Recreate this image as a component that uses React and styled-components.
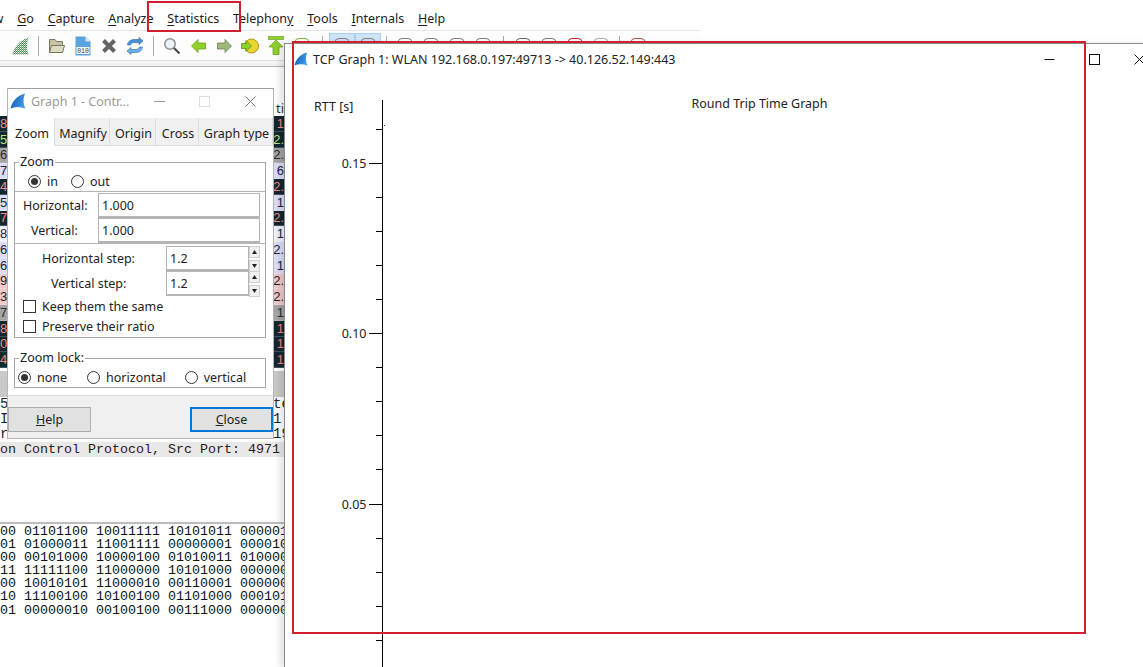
import React from "react";
import styled, { createGlobalStyle } from "styled-components";

const menus = [
	["View", "", ""],
	["", "G", "o"],
	["", "C", "apture"],
	["", "A", "nalyze"],
	["", "S", "tatistics"],
	["Telephon", "y", ""],
	["", "T", "ools"],
	["", "I", "nternals"],
	["", "H", "elp"],
];

const packets = [
	["8", "1", "alert"],
	["5", "2.", "green"],
	["6", "2.", "gray"],
	["7", "6", "lavender"],
	["4", "2.", "alert"],
	["5", "1", "lavender"],
	["7", "2.", "alert"],
	["8", "1", "pale"],
	["6", "2.", "lavender"],
	["6", "1", "lavender"],
	["9", "2.", "pink"],
	["3", "2.", "pink"],
	["7", "1", "gray"],
	["8", "1", "alert"],
	["0", "1", "alert"],
	["4", "1", "alert"],
];

const rowColors = {
	alert: ["#12272e", "#f78787"],
	green: ["#12272e", "#b9e878"],
	gray: ["#a4a4a4", "#2b2b2b"],
	lavender: ["#dcdcf8", "#12272e"],
	pale: ["#f0f0fc", "#12272e"],
	pink: ["#f4c8c8", "#12272e"],
};

const bytes = [
	"00 01101100 10011111 10101011 000001",
	"01 01000011 11001111 00000001 000010",
	"00 00101000 10000100 01010011 010000",
	"11 11111100 11000000 10101000 000000",
	"00 10010101 11000010 00110001 000000",
	"10 11100100 10100100 01101000 000101",
	"01 00000010 00100100 00111000 000000",
];

const majorTicks = [
	[163, "0.15"],
	[333, "0.10"],
	[504, "0.05"],
];
const minorTicks = [129, 197, 231, 265, 299, 367, 401, 435, 469, 538, 572, 606, 640];

const Fin = ({ size = 16 }) => (
	<svg width={size} height={size} viewBox="0 0 16 16">
		<defs>
			<linearGradient id="fin" x1="0" y1="0" x2="1" y2="0.4">
				<stop offset="0" stopColor="#0a4fa8" />
				<stop offset="1" stopColor="#3f9be8" />
			</linearGradient>
		</defs>
		<path d="M0.5 15.5C2 8.5 7 2.5 15 0.5C13 5.500 13 11 15.500 15.500C10 13.500 5 13.500 0.5 15.500Z" fill="url(#fin)" />
	</svg>
);

const SharkTool = () => (
	<svg width="17" height="18" viewBox="0 0 17 18">
		<defs>
			<pattern id="hatch" width="2" height="2" patternUnits="userSpaceOnUse">
				<rect width="1" height="1" fill="#3f8a4a" />
				<rect x="1" y="1" width="1" height="1" fill="#5f9f68" />
				<rect x="1" width="1" height="1" fill="#b5d0b8" />
			</pattern>
		</defs>
		<path d="M0.500 17.500C2 10 8 3 16.500 0.500C14.500 6 14.500 12 16.500 17.500Z" fill="url(#hatch)" />
	</svg>
);

const FolderTool = () => (
	<svg width="18" height="18" viewBox="0 0 18 18">
		<path d="M1.500 2.500H7L8.500 4.500H14.500V15.500H1.500Z" fill="#c9c5a4" stroke="#77765f" />
		<path d="M3.500 8.500H16.500L14.500 15.500H1.500Z" fill="#dedbc0" stroke="#77765f" />
	</svg>
);

const FileTool = () => (
	<svg width="16" height="20" viewBox="0 0 16 20">
		<path d="M0.500 0.500H10.500L15.500 5.500V19.500H0.500Z" fill="#5aa3dd" />
		<path d="M10.500 0.500V5.500H15.500Z" fill="#d4e8f7" />
		<rect x="1.500" y="11" width="13" height="7" fill="#f3f3ee" />
		<text x="8" y="17" textAnchor="middle" fontSize="6.500" fontFamily="Liberation Mono, monospace" fill="#444">
			010
		</text>
	</svg>
);

const CloseTool = () => (
	<svg width="16" height="16" viewBox="0 0 16 16">
		<path d="M2.500 2.500L13.500 13.500M13.500 2.500L2.500 13.500" stroke="#646464" strokeWidth="4" />
	</svg>
);

const ReloadTool = () => (
	<svg width="18" height="18" viewBox="0 0 18 18" fill="none">
		<path d="M1.500 8C2 4 5 2.500 8.500 2.500H13V0.500L17 4L13 7.500V5.500H8C6 5.500 5 6.500 4.500 8Z" fill="#4a90d6" stroke="#2b62a6" strokeWidth="0.6" />
		<path d="M16.500 10C16 14 13 15.500 9.500 15.500H5V17.500L1 14L5 10.500V12.500H10C12 12.500 13 11.500 13.500 10Z" fill="#6fb0e8" stroke="#2b62a6" strokeWidth="0.6" />
	</svg>
);

const SearchTool = () => (
	<svg width="18" height="18" viewBox="0 0 18 18" fill="none">
		<circle cx="7" cy="7" r="5.200" fill="#eef3f8" stroke="#8d8d8d" strokeWidth="1.500" />
		<path d="M11 11L16.500 16.500" stroke="#4a4a4a" strokeWidth="2.200" />
	</svg>
);

const ArrowTool = ({ dir, fill, line }) => (
	<svg width="15" height="14" viewBox="0 0 15 14">
		<path
			d={dir === "left" ? "M0.500 7L7 0.500V4H14.500V10H7V13.500Z" : "M14.500 7L8 0.500V4H0.500V10H8V13.500Z"}
			fill={fill}
			stroke={line}
			strokeWidth="0.700"
		/>
	</svg>
);

const GoTool = () => (
	<svg width="18" height="16" viewBox="0 0 18 16">
		<circle cx="10.500" cy="8" r="7" fill="#ecd42e" stroke="#a89a1c" />
		<path d="M0.500 5.500H5V2.500L10.500 8L5 13.500V10.500H0.500Z" fill="#8fcf2a" stroke="#4f8a14" strokeWidth="0.700" />
	</svg>
);

const TopTool = () => (
	<svg width="16" height="19" viewBox="0 0 16 19">
		<rect x="0.500" y="0.500" width="15" height="3" fill="#8fd02a" stroke="#5f9a18" strokeWidth="0.600" />
		<path d="M8 4L15 11H11V18.500H5V11H1Z" fill="#8fd02a" stroke="#5f9a18" strokeWidth="0.700" />
	</svg>
);

const TopOutline = ({ color = "#8a7a7a" }) => (
	<svg width="18" height="18" viewBox="0 0 18 18" fill="none">
		<rect x="2" y="1.500" width="14" height="14" rx="4" stroke={color} />
	</svg>
);

const Radio = ({ label, checked, $gap }) => (
	<RadioItem $gap={$gap}>
		<RadioMark $checked={checked} />
		{label}
	</RadioItem>
);

const Field = ({ label, value, $labelWidth, $indent }) => (
	<FieldRow>
		<FieldLabel $width={$labelWidth} $indent={$indent}>
			{label}
		</FieldLabel>
		<TextBox>{value}</TextBox>
	</FieldRow>
);

const StepField = ({ label, value, $indent }) => (
	<FieldRow>
		<FieldLabel $width={151} $indent={$indent}>
			{label}
		</FieldLabel>
		<StepBox>{value}</StepBox>
		<Spinner>
			<SpinButton>
				<svg width="5" height="4" viewBox="0 0 5 4">
					<path d="M2.500 0L5 4H0Z" fill="#222" />
				</svg>
			</SpinButton>
			<SpinButton>
				<svg width="5" height="4" viewBox="0 0 5 4">
					<path d="M0 0H5L2.500 4Z" fill="#222" />
				</svg>
			</SpinButton>
		</Spinner>
	</FieldRow>
);

const ControlDialog = () => (
	<Dialog>
		<DialogTitleBar>
			<Fin />
			<DialogTitle>Graph 1 - Contr...</DialogTitle>
			<DialogControl>
				<svg width="11" height="11" viewBox="0 0 11 11">
					<path d="M0 5.500H11" stroke="#999" />
				</svg>
			</DialogControl>
			<DialogControl>
				<svg width="11" height="11" viewBox="0 0 11 11">
					<rect x="0.500" y="0.500" width="10" height="10" fill="none" stroke="#ddd" />
				</svg>
			</DialogControl>
			<DialogControl>
				<svg width="11" height="11" viewBox="0 0 11 11">
					<path d="M0.500 0.500L10.500 10.500M10.500 0.500L0.500 10.500" stroke="#777" />
				</svg>
			</DialogControl>
		</DialogTitleBar>
		<Tabs>
			<Tab $active $width={47}>
				Zoom
			</Tab>
			<Tab $width={55}>Magnify</Tab>
			<Tab $width={46}>Origin</Tab>
			<Tab $width={43}>Cross</Tab>
			<Tab $width={74}>Graph type</Tab>
		</Tabs>
		<Pane>
			<Group>
				<Legend>Zoom</Legend>
				<RadioRow $left={13}>
					<Radio label="in" checked $gap={13} />
					<Radio label="out" />
				</RadioRow>
				<Rule $after={1} />
				<Field label="Horizontal:" value="1.000" $labelWidth={83} $indent={8} />
				<Field label="Vertical:" value="1.000" $labelWidth={83} $indent={16} />
				<Rule $after={2} />
				<StepField label="Horizontal step:" value="1.2" $indent={27} />
				<StepField label="Vertical step:" value="1.2" $indent={36} />
				<CheckList>
					<CheckRow>
						<CheckMark />
						Keep them the same
					</CheckRow>
					<CheckRow>
						<CheckMark />
						Preserve their ratio
					</CheckRow>
				</CheckList>
			</Group>
			<Group $lock>
				<Legend>Zoom lock:</Legend>
				<RadioRow $left={3}>
					<Radio label="none" checked $gap={20} />
					<Radio label="horizontal" $gap={19} />
					<Radio label="vertical" />
				</RadioRow>
			</Group>
		</Pane>
		<DialogFooter>
			<PushButton>
				<u>H</u>elp
			</PushButton>
			<PushButton $focused>
				<u>C</u>lose
			</PushButton>
		</DialogFooter>
	</Dialog>
);

const GraphWindow = () => (
	<GraphFrame>
		<GraphTitleBar>
			<Fin size={14} />
			<GraphTitle>TCP Graph 1: WLAN 192.168.0.197:49713 -&gt; 40.126.52.149:443</GraphTitle>
			<WindowControl>
				<svg width="11" height="11" viewBox="0 0 11 11">
					<path d="M0.500 5.500H10.500" stroke="#111" />
				</svg>
			</WindowControl>
			<WindowControl>
				<svg width="11" height="11" viewBox="0 0 11 11">
					<rect x="0.500" y="0.500" width="10" height="10" fill="none" stroke="#111" />
				</svg>
			</WindowControl>
			<WindowControl>
				<svg width="11" height="11" viewBox="0 0 11 11">
					<path d="M0.500 0.500L10.500 10.500M10.500 0.500L0.500 10.500" stroke="#111" />
				</svg>
			</WindowControl>
		</GraphTitleBar>
		<Plot viewBox="285 74 877 593" width="877" height="593">
			<PlotText x="314" y="111">
				RTT [s]
			</PlotText>
			<PlotText x="759.500" y="108" textAnchor="middle">
				Round Trip Time Graph
			</PlotText>
			<line x1="382.500" y1="100" x2="382.500" y2="667" stroke="#000" />
			<rect x="384" y="125" width="1" height="1" fill="#333" />
			{majorTicks.map(([y, label]) => (
				<g key={label}>
					<line x1="369" y1={y + 0.5} x2="382" y2={y + 0.5} stroke="#000" />
					<PlotText x="366.500" y={y + 5} textAnchor="end">
						{label}
					</PlotText>
				</g>
			))}
			{minorTicks.map((y) => (
				<line key={y} x1="376" y1={y + 0.5} x2="382" y2={y + 0.5} stroke="#000" />
			))}
		</Plot>
	</GraphFrame>
);

const App = () => (
	<Desktop>
		<GlobalStyle />
		<MainWindow>
			<MenuBar>
				{menus.map(([before, key, after]) => (
					<MenuItem key={before + key + after}>
						{before}
						<u>{key}</u>
						{after}
					</MenuItem>
				))}
			</MenuBar>
			<Toolbar>
				<ToolButton>
					<SharkTool />
				</ToolButton>
				<ToolSeparator />
				<ToolButton>
					<FolderTool />
				</ToolButton>
				<ToolButton>
					<FileTool />
				</ToolButton>
				<ToolButton>
					<CloseTool />
				</ToolButton>
				<ToolButton>
					<ReloadTool />
				</ToolButton>
				<ToolSeparator />
				<ToolButton>
					<SearchTool />
				</ToolButton>
				<ToolButton>
					<ArrowTool dir="left" fill="#8fd02a" line="#5f9a18" />
				</ToolButton>
				<ToolButton>
					<ArrowTool dir="right" fill="#9db87a" line="#5f7a48" />
				</ToolButton>
				<ToolButton>
					<GoTool />
				</ToolButton>
				<ToolButton>
					<TopTool />
				</ToolButton>
				<ToolButton>
					<TopOutline color="#7fb03a" />
				</ToolButton>
				<ToolSeparator $wide />
				<ToolButton $selected>
					<TopOutline />
				</ToolButton>
				<ToolButton $selected>
					<TopOutline />
				</ToolButton>
				<ToolSeparator />
				{[0, 1, 2, 3].map((i) => (
					<ToolButton key={i}>
						<TopOutline />
					</ToolButton>
				))}
				<ToolSeparator $wide />
				{["#6a6a6a", "#7a7a7a", "#d0202f", "#b0a8a8"].map((color) => (
					<ToolButton key={color}>
						<TopOutline color={color} />
					</ToolButton>
				))}
				<ToolSeparator />
				<ToolButton>
					<TopOutline color="#c05050" />
				</ToolButton>
			</Toolbar>
			<FilterGap />
			<LowerPanes>
				<PacketHeader>
					<PacketCell />
					<PacketCell $right>ti</PacketCell>
				</PacketHeader>
				{packets.map(([left, right, kind], i) => (
					<PacketRow key={i} $kind={kind}>
						<PacketCell>{left}</PacketCell>
						<PacketCell $right>{right}</PacketCell>
					</PacketRow>
				))}
				<PacketScroll />
				<DetailRow>
					<span>5</span>
					<span>te</span>
				</DetailRow>
				<DetailRow>
					<span>I</span>
					<span>1</span>
				</DetailRow>
				<DetailRow>
					<span>r</span>
					<span>19</span>
				</DetailRow>
				<DetailSelected>on Control Protocol, Src Port: 4971</DetailSelected>
				<BytesPane>
					{bytes.map((line) => (
						<ByteLine key={line}>{line}</ByteLine>
					))}
				</BytesPane>
			</LowerPanes>
		</MainWindow>
		<ControlDialog />
		<GraphWindow />
		<Annotation $left={147} $top={1} $width={94} $height={31} />
		<Annotation $left={292} $top={41} $width={794} $height={593} />
	</Desktop>
);

export default App;

const GlobalStyle = createGlobalStyle`
	html, body {
		margin: 0;
		padding: 0;
		background: #fff;
	}
	body {
		font-family: "Noto Sans", "Open Sans", sans-serif;
		font-size: 12.5px;
		color: #222;
	}
`;

const Desktop = styled.div`
	position: relative;
	width: 1143px;
	height: 667px;
	overflow: hidden;
	background: #fff;
`;

const MainWindow = styled.div`
	display: flex;
	flex-direction: column;
	width: 700px;
	height: 667px;
	overflow: hidden;
`;

const MenuBar = styled.div`
	display: flex;
	flex-shrink: 0;
	gap: 13.8px;
	height: 26px;
	margin-top: 5px;
	margin-bottom: -1px;
	margin-left: -24px;
	align-items: center;
	white-space: nowrap;
	font-size: 12.5px;
	color: #1c1c1c;
`;

const MenuItem = styled.span`
	u {
		text-underline-offset: 2px;
	}
`;

const Toolbar = styled.div`
	display: flex;
	flex-shrink: 0;
	align-items: center;
	width: 700px;
	height: 30px;
	padding-left: 7px;
	box-sizing: border-box;
	border-top: 1px solid #e6e6e6;
	background: #fdfdfd;
`;

const ToolButton = styled.div`
	display: flex;
	flex: 0 0 26px;
	align-items: center;
	justify-content: center;
	height: 26px;
	background: ${(p) => (p.$selected ? "#cde4f7" : "transparent")};
	outline: ${(p) => (p.$selected ? "1px solid #a8d0f0" : "none")};
	outline-offset: -1px;
`;

const ToolSeparator = styled.div`
	flex: 0 0 ${(p) => (p.$wide ? 14 : 11)}px;
	height: 20px;
	background: linear-gradient(#a8a8a8, #a8a8a8) center / 1px 100% no-repeat;
`;

const FilterGap = styled.div`
	flex: 0 0 40px;
	box-sizing: border-box;
	background: linear-gradient(#f7f7f7, #efefef) top / 100% 5px no-repeat;
	border-top: 1px solid #dcdcdc;

	&::after {
		content: "";
		display: block;
		margin-top: 5px;
		border-top: 1px solid #b4b4b4;
	}
`;

const LowerPanes = styled.div`
	display: flex;
	flex-direction: column;
	width: 284px;
	overflow: hidden;
`;

const PacketRowBase = styled.div`
	display: flex;
	flex-shrink: 0;
	justify-content: space-between;
	align-items: center;
	box-sizing: border-box;
	height: 15.75px;
	overflow: hidden;
	font-family: "Liberation Sans", sans-serif;
	font-size: 13px;
`;

const PacketHeader = styled(PacketRowBase)`
	color: #333;
	height: 16px;
	font-family: "Noto Sans", sans-serif;
`;

const PacketRow = styled(PacketRowBase)`
	background: ${(p) => rowColors[p.$kind][0]};
	color: ${(p) => rowColors[p.$kind][1]};
	border-bottom: 1px solid rgba(255, 255, 255, 0.2);
`;

const PacketCell = styled.span`
	display: flex;
	justify-content: ${(p) => (p.$right ? "flex-end" : "flex-start")};
	width: ${(p) => (p.$right ? "11px" : "8px")};
	overflow: hidden;
	white-space: nowrap;
`;

const PacketScroll = styled.div`
	flex: 0 0 26px;
	margin-top: 3px;
	background: #c9c9c9;
`;

const DetailRow = styled.div`
	display: flex;
	flex-shrink: 0;
	justify-content: space-between;
	height: 15px;
	font-family: "Liberation Mono", monospace;
	font-size: 14px;
	line-height: 15px;
	color: #222;

	span:last-child {
		width: 11px;
		overflow: hidden;
	}
`;

const DetailSelected = styled.div`
	flex: 0 0 15px;
	background: #e8e8e8;
	font-family: "Liberation Mono", monospace;
	font-size: 13.33px;
	line-height: 15px;
	white-space: nowrap;
	color: #222;
`;

const BytesPane = styled.div`
	flex-shrink: 0;
	margin-top: 65px;
	padding-top: 1px;
	border-top: 2px solid #bdbdbd;
`;

const ByteLine = styled.div`
	height: 13.1px;
	font-family: "Liberation Mono", monospace;
	font-size: 13.33px;
	line-height: 13.1px;
	white-space: pre;
	color: #111;
`;

const Dialog = styled.div`
	position: absolute;
	left: 7px;
	top: 88px;
	display: flex;
	flex-direction: column;
	box-sizing: border-box;
	width: 267px;
	height: 351px;
	border: 1px solid #b5b5b5;
	border-top-color: #a0a0a0;
	background: #fff;
`;

const DialogTitleBar = styled.div`
	display: flex;
	flex: 0 0 29px;
	box-sizing: border-box;
	align-items: center;
	padding: 0 0 5px 2px;
`;

const DialogTitle = styled.span`
	flex: 1;
	margin-left: 5px;
	color: #9a9a9a;
	font-size: 12.5px;
	white-space: nowrap;
`;

const DialogControl = styled.span`
	display: flex;
	justify-content: center;
	width: 45.500px;
`;

const Tabs = styled.div`
	display: flex;
	flex: 0 0 28px;
	align-items: stretch;
	background: #f0f0f0;
	border-bottom: 1px solid #dcdcdc;
	box-sizing: border-box;
`;

const Tab = styled.div`
	display: flex;
	flex: 0 0 ${(p) => p.$width}px;
	box-sizing: border-box;
	align-items: center;
	justify-content: center;
	margin-bottom: ${(p) => (p.$active ? "-1px" : "0")};
	padding: 3px 0 0 2px;
	background: ${(p) => (p.$active ? "#fff" : "#f0f0f0")};
	border-right: 1px solid #dcdcdc;
	font-size: 12.5px;
	white-space: nowrap;
`;

const Pane = styled.div`
	flex: 1;
	padding: 7px 7px 0 6px;
`;

const Group = styled.fieldset`
	box-sizing: border-box;
	width: 252px;
	margin: ${(p) => (p.$lock ? "11px" : "0")} 0 0;
	padding: 0;
	border: 1px solid #a9a9a9;
	min-width: 0;
`;

const Legend = styled.legend`
	height: 18px;
	margin-left: 4px;
	padding: 0 1px;
	font-size: 12.5px;
	line-height: 17px;
`;

const RadioRow = styled.div`
	display: flex;
	align-items: center;
	height: 20px;
	padding-left: ${(p) => p.$left}px;
`;

const RadioItem = styled.span`
	display: inline-flex;
	align-items: center;
	margin-right: ${(p) => p.$gap || 0}px;
`;

const RadioMark = styled.span`
	display: inline-flex;
	flex: 0 0 13px;
	box-sizing: border-box;
	align-items: center;
	justify-content: center;
	width: 13px;
	height: 13px;
	margin-right: 6px;
	border: 1px solid #333;
	border-radius: 50%;

	&::after {
		content: "";
		width: 7px;
		height: 7px;
		border-radius: 50%;
		background: ${(p) => (p.$checked ? "#333" : "transparent")};
	}
`;

const Rule = styled.div`
	height: 1px;
	margin-bottom: ${(p) => p.$after}px;
	background: #b4b4b4;
`;

const FieldRow = styled.div`
	display: flex;
	align-items: center;
	height: 25px;
`;

const FieldLabel = styled.span`
	box-sizing: border-box;
	flex: 0 0 ${(p) => p.$width}px;
	padding-left: ${(p) => p.$indent}px;
	white-space: nowrap;
`;

const TextBox = styled.div`
	box-sizing: border-box;
	width: 162px;
	height: 25px;
	padding-left: 3px;
	border: 1px solid #b4b4b4;
	border-bottom-width: 2px;
	line-height: 23px;
`;

const StepBox = styled(TextBox)`
	width: 83px;
`;

const Spinner = styled.div`
	display: flex;
	flex-direction: column;
	gap: 2px;
`;

const SpinButton = styled.div`
	display: flex;
	align-items: center;
	justify-content: center;
	width: 9px;
	height: 10px;
	background: #f0f0f0;
	border: 1px solid #d0d0d0;
`;

const CheckList = styled.div`
	padding-bottom: 1px;
`;

const CheckRow = styled.label`
	display: flex;
	align-items: center;
	height: 20px;
	padding-left: 8px;
`;

const CheckMark = styled.span`
	box-sizing: border-box;
	flex: 0 0 13px;
	height: 13px;
	margin-right: 6px;
	border: 1px solid #333;
`;

const DialogFooter = styled.div`
	display: flex;
	flex: 0 0 43px;
	box-sizing: border-box;
	justify-content: space-between;
	padding-top: 11px;
	background: #f0f0f0;
	border-top: 1px solid #dcdcdc;
`;

const PushButton = styled.div`
	display: flex;
	box-sizing: border-box;
	align-items: center;
	justify-content: center;
	width: 83px;
	height: 25px;
	background: #e1e1e1;
	border: ${(p) => (p.$focused ? "2px solid #0078d7" : "1px solid #adadad")};
`;

const GraphFrame = styled.div`
	position: absolute;
	left: 284px;
	top: 43px;
	width: 878px;
	height: 624px;
	box-sizing: border-box;
	border-top: 1px solid #8a8a8a;
	border-left: 1px solid #8a8a8a;
	background: #fff;
	box-shadow: -5px 0 6px rgba(0, 0, 0, 0.1);
`;

const GraphTitleBar = styled.div`
	display: flex;
	align-items: center;
	height: 30px;
	padding-left: 9px;
`;

const GraphTitle = styled.span`
	flex: 1;
	margin-left: 5px;
	font-size: 12.5px;
	white-space: nowrap;
`;

const WindowControl = styled.span`
	display: flex;
	justify-content: center;
	width: 45px;
`;

const Plot = styled.svg`
	display: block;
`;

const PlotText = styled.text`
	font-family: "Noto Sans", "Open Sans", sans-serif;
	font-size: 12.5px;
	fill: #222;
`;

const Annotation = styled.div`
	position: absolute;
	left: ${(p) => p.$left}px;
	top: ${(p) => p.$top}px;
	width: ${(p) => p.$width}px;
	height: ${(p) => p.$height}px;
	box-sizing: border-box;
	border: 2px solid #d0202f;
	pointer-events: none;
`;
